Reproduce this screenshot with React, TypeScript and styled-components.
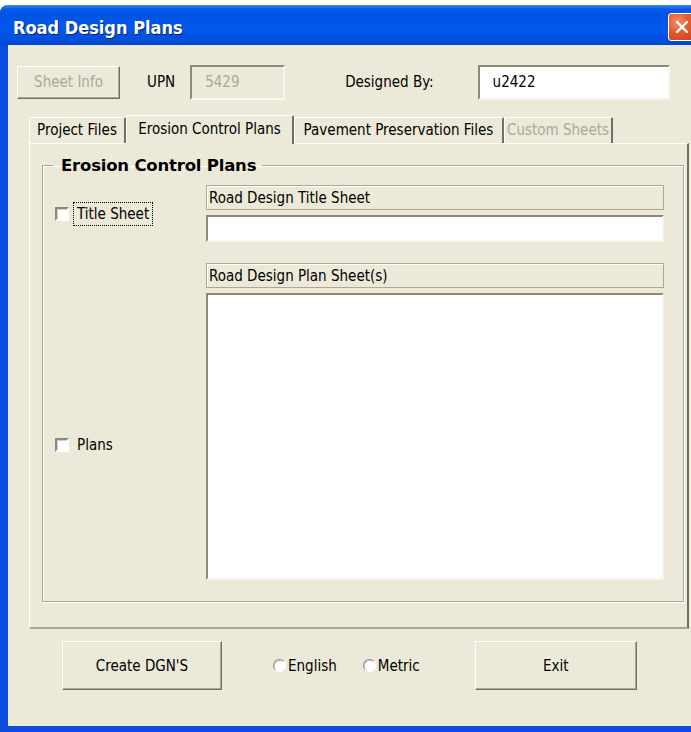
import React from "react";
import styled, { createGlobalStyle } from "styled-components";

const GlobalStyle = createGlobalStyle`
  html, body {
    margin: 0;
    padding: 0;
    background: #ffffff;
    overflow: hidden;
  }
  * { box-sizing: border-box; }
`;

const UI_FONT = `"DejaVu Sans Condensed", "DejaVu Sans", Tahoma, sans-serif`;

const App: React.FC = () => {
  return (
    <>
      <GlobalStyle />
      <Window>
        <TitleBar>
          <Title>Road Design Plans</Title>
          <CloseBox>
            <svg width="16" height="16" viewBox="0 0 16 16">
              <path d="M3 3 L13 13 M13 3 L3 13" stroke="#fff" strokeWidth="2.4" strokeLinecap="round" />
            </svg>
          </CloseBox>
        </TitleBar>
        <Client>
          <TopRow>
            <Button w={103} h={33} disabled>Sheet Info</Button>
            <Label ml={27}>UPN</Label>
            <TextBox w={95} ml={15} disabled>5429</TextBox>
            <Label ml={60}>Designed By:</Label>
            <TextBox w={192} ml={44}>u2422</TextBox>
          </TopRow>

          <TabStrip>
            <Tab w={97}>Project Files</Tab>
            <Tab w={168} active>Erosion Control Plans</Tab>
            <Tab w={210}>Pavement Preservation Files</Tab>
            <Tab w={109} disabled>Custom Sheets</Tab>
          </TabStrip>
          <TabPanel>
            <GroupBox>
              <Legend>Erosion Control Plans</Legend>
              <FieldGrid>
                <CheckCell row="1 / 3">
                  <CheckBox />
                  <FocusLabel>Title Sheet</FocusLabel>
                </CheckCell>
                <Caption>Road Design Title Sheet</Caption>
                <TextBox w={458} h={27} />
                <CheckCell row="4 / 6" shift={12}>
                  <CheckBox />
                  <CheckText>Plans</CheckText>
                </CheckCell>
                <Caption mt={16}>Road Design Plan Sheet(s)</Caption>
                <ListBox />
              </FieldGrid>
            </GroupBox>
          </TabPanel>

          <BottomRow>
            <Button w={160} h={49}>Create DGN'S</Button>
            <RadioGroup>
              <RadioOption>
                <Radio />
                English
              </RadioOption>
              <RadioOption>
                <Radio />
                Metric
              </RadioOption>
            </RadioGroup>
            <Button w={162} h={49}>Exit</Button>
          </BottomRow>
        </Client>
      </Window>
    </>
  );
};

export default App;

const Window = styled.div`
  margin-top: 5px;
  width: 691px;
  height: 727px;
  display: flex;
  flex-direction: column;
  background: #0a4de0;
  border-radius: 8px 0 0 0;
  overflow: hidden;
`;

const TitleBar = styled.div`
  height: 40px;
  flex: none;
  display: flex;
  align-items: center;
  justify-content: space-between;
  padding: 4px 0 0 13px;
  background: linear-gradient(
    to bottom,
    #3b8cf7 0px,
    #0a5ae8 4px,
    #0054e3 10px,
    #0058ee 24px,
    #0150de 34px,
    #0047d1 40px
  );
`;

const Title = styled.div`
  color: #ffffff;
  font-family: "DejaVu Sans Condensed", "Liberation Sans", sans-serif;
  font-weight: bold;
  font-size: 18px;
  text-shadow: 1px 1px 0 #0a1e72;
`;

const CloseBox = styled.div`
  width: 27px;
  height: 28px;
  margin-top: -1px;
  margin-right: -4px;
  display: flex;
  align-items: center;
  justify-content: center;
  border: 1px solid #ffffff;
  border-radius: 3px;
  background: radial-gradient(circle at 35% 30%, #f0926b 0%, #e35a2c 45%, #c8431b 100%);
`;

const Client = styled.div`
  flex: 1;
  margin-left: 8px;
  margin-bottom: 6px;
  background: #ece9d8;
  display: flex;
  flex-direction: column;
  padding: 19px 0 0 9px;
  font-family: ${UI_FONT};
  font-size: 15px;
  color: #000000;
`;

const TopRow = styled.div`
  display: flex;
  align-items: center;
  height: 36px;
`;

const Label = styled.span<{ ml?: number }>`
  margin-left: ${({ ml }) => ml ?? 0}px;
`;

const Button = styled.button<{ w: number; h: number }>`
  width: ${({ w }) => w}px;
  height: ${({ h }) => h}px;
  flex: none;
  background: #ece9d8;
  font-family: ${UI_FONT};
  font-size: 15px;
  color: #000000;
  border: 1px solid;
  border-color: #ffffff #716f64 #716f64 #ffffff;
  box-shadow: inset -1px -1px 0 #aca899;
  padding: 0;

  &:disabled {
    color: #aca899;
  }
`;

const TextBox = styled.div<{ w: number; h?: number; ml?: number; disabled?: boolean }>`
  width: ${({ w }) => w}px;
  height: ${({ h }) => h ?? 35}px;
  flex: none;
  margin-left: ${({ ml }) => ml ?? 0}px;
  display: flex;
  align-items: center;
  padding-left: 13px;
  background: ${({ disabled }) => (disabled ? "#ece9d8" : "#ffffff")};
  color: ${({ disabled }) => (disabled ? "#aca899" : "#000000")};
  border: 2px solid;
  border-color: #8d8a7d #f6f5ef #f6f5ef #8d8a7d;
`;

const TabStrip = styled.div`
  display: flex;
  align-items: flex-end;
  margin: 14px 0 0 12px;
  height: 29px;
`;

const Tab = styled.div<{ w: number; active?: boolean; disabled?: boolean }>`
  width: ${({ w }) => w}px;
  height: ${({ active }) => (active ? 29 : 26)}px;
  margin-bottom: ${({ active }) => (active ? -1 : 0)}px;
  display: flex;
  align-items: center;
  justify-content: center;
  padding-bottom: 2px;
  background: #ece9d8;
  color: ${({ disabled }) => (disabled ? "#aca899" : "#000000")};
  border-top: 1px solid #ffffff;
  border-left: 1px solid #ffffff;
  border-right: 2px solid #716f64;
  border-radius: 2px 2px 0 0;
  position: relative;
  z-index: ${({ active }) => (active ? 1 : 0)};
  white-space: nowrap;
`;

const TabPanel = styled.div`
  width: 660px;
  height: 486px;
  margin-left: 12px;
  border-top: 1px solid #ffffff;
  border-left: 1px solid #ffffff;
  border-right: 2px solid #716f64;
  border-bottom: 2px solid #aca899;
  padding: 12px 0 0 12px;
`;

const GroupBox = styled.fieldset`
  width: 642px;
  height: 446px;
  margin: 0;
  padding: 0;
  border: 1px solid #aca899;
  box-shadow: 1px 1px 0 #ffffff, inset 1px 1px 0 #ffffff;
`;

const Legend = styled.legend`
  margin-left: 10px;
  padding: 0 6px 0 8px;
  font-weight: bold;
  font-size: 16.5px;
  font-family: "DejaVu Sans", Tahoma, sans-serif;
  letter-spacing: -0.2px;
`;

const FieldGrid = styled.div`
  display: grid;
  grid-template-columns: 163px 458px;
  grid-template-rows: auto auto auto auto;
  row-gap: 5px;
  margin-top: 10px;
`;

const CheckCell = styled.div<{ row: string; shift?: number }>`
  grid-column: 1;
  grid-row: ${({ row }) => row};
  align-self: center;
  display: flex;
  align-items: center;
  padding-left: 12px;
  margin-top: ${({ shift }) => shift ?? 0}px;
`;

const CheckBox = styled.span`
  width: 14px;
  height: 14px;
  flex: none;
  background: #ffffff;
  border: 2px solid;
  border-color: #8d8a7d #ffffff #ffffff #8d8a7d;
  box-shadow: inset 1px 1px 0 #d4d0c8;
`;

const CheckText = styled.span`
  margin-left: 8px;
`;

const FocusLabel = styled.span`
  margin-left: 4px;
  padding: 2px 3px;
  border: 1px dotted #000000;
`;

const Caption = styled.div<{ mt?: number }>`
  grid-column: 2;
  height: 25px;
  margin-top: ${({ mt }) => mt ?? 0}px;
  display: flex;
  align-items: center;
  padding-left: 2px;
  border: 1px solid #aca899;
  box-shadow: inset 1px 1px 0 #ffffff;
`;

const ListBox = styled.div`
  grid-column: 2;
  height: 287px;
  background: #ffffff;
  border: 2px solid;
  border-color: #8d8a7d #f6f5ef #f6f5ef #8d8a7d;
`;

const BottomRow = styled.div`
  display: flex;
  align-items: center;
  margin-top: 12px;
  padding-left: 45px;
`;

const RadioGroup = styled.div`
  display: flex;
  align-items: center;
  gap: 26px;
  margin: 0 55px 0 51px;
`;

const RadioOption = styled.label`
  display: flex;
  align-items: center;
  gap: 2px;
`;

const Radio = styled.span`
  width: 13px;
  height: 13px;
  border-radius: 50%;
  background: #ffffff;
  border: 1px solid;
  border-color: #8d8a7d #ffffff #ffffff #8d8a7d;
  box-shadow: inset 1px 1px 0 #d4d0c8;
`;
